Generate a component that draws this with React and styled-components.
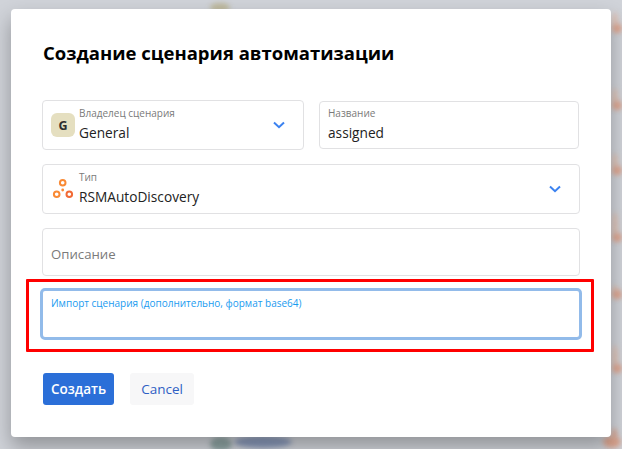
import React from "react";
import styled, { createGlobalStyle } from "styled-components";

const Global = createGlobalStyle`
  html, body { margin: 0; padding: 0; width: 622px; height: 449px; overflow: hidden; }
  * { box-sizing: border-box; }
`;

const Backdrop = styled.div`
  position: relative;
  width: 622px;
  height: 449px;
  overflow: hidden;
  background: #d0d3d9;
  padding: 9px 11px 12px;
  font-family: "Open Sans", "Noto Sans", sans-serif;
`;

const Blob = styled.div`
  position: absolute;
  left: ${(p) => p.$x}px;
  top: ${(p) => p.$y}px;
  width: ${(p) => p.$w}px;
  height: ${(p) => p.$h}px;
  background: ${(p) => p.$c};
  border-radius: 50%;
  filter: blur(2.5px);
`;

const Modal = styled.div`
  position: relative;
  width: 600px;
  height: 428px;
  background: #fff;
  border-radius: 4px;
  box-shadow: 0 10px 20px rgba(0, 0, 0, 0.3);
  padding: 31px 31px 0;
`;

const Title = styled.h2`
  margin: 0 0 35px 1px;
  font-size: 18.5px;
  line-height: 25px;
  font-weight: 700;
  color: #000;
`;

const Row = styled.div`
  display: flex;
  align-items: center;
  gap: 15px;
  margin-bottom: 14px;
`;

const Field = styled.div`
  display: flex;
  align-items: center;
  flex: ${(p) => (p.$w ? `0 0 ${p.$w}px` : "1")};
  height: ${(p) => p.$h || 50}px;
  margin-right: ${(p) => p.$inset || 0}px;
  border: 1px solid #e1e1e3;
  border-radius: 4px;
  padding: 0 ${(p) => (p.$plain ? 7 : 18)}px 0 8px;
  background: #fff;
`;

const Avatar = styled.div`
  flex: none;
  display: flex;
  align-items: center;
  justify-content: center;
  width: 24px;
  height: 24px;
  border-radius: 6px;
  background: #e5dfc0;
  color: #2e2e2e;
  font-size: 12.5px;
  font-weight: 700;
  margin-right: 4px;
`;

const TypeIcon = styled.svg`
  flex: none;
  width: 24px;
  height: 24px;
  margin-right: 4px;
`;

const Stack = styled.div`
  flex: 1;
  display: flex;
  flex-direction: column;
  min-width: 0;
`;

const Small = styled.span`
  font-size: 10px;
  line-height: 12px;
  color: #7a7a7a;
  white-space: nowrap;
`;

const Value = styled.span`
  font-size: 13.7px;
  line-height: 20px;
  color: #222;
  margin-top: 4px;
  white-space: nowrap;
`;

const Placeholder = styled.span`
  font-size: 13.2px;
  color: #7a7a7a;
  padding-top: 3px;
`;

const Highlight = styled.div`
  border: 3px solid #ff0000;
  width: 568px;
  height: 73px;
  margin: -11px 0 0 -16px;
  padding: 6px 9px 9px 11px;
  border-radius: 1px;
`;

const Focused = styled.div`
  height: 52px;
  border: 3px solid #92bbea;
  border-radius: 5px;
  padding: 6px 8px;
  font-size: 10px;
  line-height: 12px;
  color: #1a9bf0;
  white-space: nowrap;
`;

const Actions = styled.div`
  display: flex;
  gap: 16px;
  margin: 21px 0 0 1px;
`;

const Button = styled.button`
  height: 32px;
  width: ${(p) => p.$w}px;
  border: 0;
  border-radius: 3px;
  font: ${(p) => (p.$primary ? 600 : 400)} 13.5px "Open Sans", sans-serif;
  background: ${(p) => (p.$primary ? "#2b6fd8" : "#f7f7f8")};
  color: ${(p) => (p.$primary ? "#fff" : "#2f5fc4")};
  padding: 0;
`;

const Chevron = () => (
  <svg width="12" height="8" viewBox="0 0 12 8" fill="none">
    <path d="M1 1.5 6 6.2l5-4.7" stroke="#3b82f0" strokeWidth="2" />
  </svg>
);

const Streak = ({ y, h }) => (
  <>
    <Blob $x={612} $y={y} $w={6} $h={h} $c="#e0c3b6" />
    <Blob $x={613} $y={y + h - 9} $w={9} $h={9} $c="#dfa48e" />
  </>
);

export default function App() {
  return (
    <>
      <Global />
      <Backdrop>
        <Blob $x={210} $y={3} $w={20} $h={9} $c="#bdb89c" />
        {[
          [12, 21],
          [88, 22],
          [153, 22],
          [212, 30],
          [285, 14],
          [345, 28],
        ].map(([y, h]) => (
          <Streak key={y} y={y} h={h} />
        ))}
        <Blob $x={603} $y={436} $w={18} $h={12} $c="#dca48e" />
        <Blob $x={612} $y={428} $w={5} $h={12} $c="#dca48e" />
        <Blob $x={210} $y={437} $w={22} $h={14} $c="#8fa5a4" />
        <Blob $x={234} $y={436} $w={58} $h={12} $c="#8a9abb" />
        <Modal>
          <Title>Создание сценария автоматизации</Title>
          <Row>
            <Field $w={262}>
              <Avatar>G</Avatar>
              <Stack>
                <Small>Владелец сценария</Small>
                <Value>General</Value>
              </Stack>
              <Chevron />
            </Field>
            <Field $plain $h={48} $inset={1}>
              <Stack>
                <Small>Название</Small>
                <Value>assigned</Value>
              </Stack>
            </Field>
          </Row>
          <Row>
            <Field>
              <TypeIcon viewBox="0 0 24 24" fill="none" stroke="#f98a35" strokeWidth="2">
                <circle cx="11.7" cy="5.7" r="2.8" />
                <circle cx="5.7" cy="17.3" r="2.8" />
                <circle cx="18.3" cy="17.3" r="2.8" stroke="#f26a35" />
                <circle cx="11.7" cy="13" r="1.4" fill="#f98a35" stroke="none" />
              </TypeIcon>
              <Stack>
                <Small>Тип</Small>
                <Value>RSMAutoDiscovery</Value>
              </Stack>
              <Chevron />
            </Field>
          </Row>
          <Row>
            <Field $plain $h={48}>
              <Placeholder>Описание</Placeholder>
            </Field>
          </Row>
          <Highlight>
            <Focused>Импорт сценария (дополнительно, формат base64)</Focused>
          </Highlight>
          <Actions>
            <Button $primary $w={71}>Создать</Button>
            <Button $w={64}>Cancel</Button>
          </Actions>
        </Modal>
      </Backdrop>
    </>
  );
}
